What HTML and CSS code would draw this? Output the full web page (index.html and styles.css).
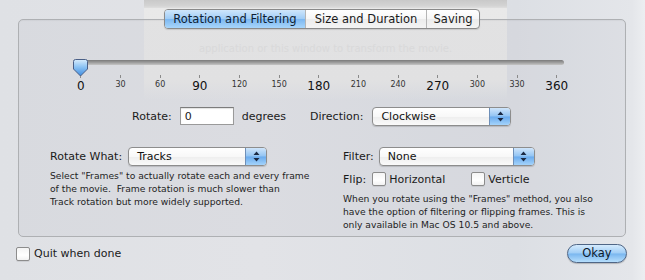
FILE: index.html
```html
<!DOCTYPE html>
<html>
<head>
<meta charset="utf-8">
<link rel="stylesheet" href="styles.css">
</head>
<body>
<div class="desk">
  <div class="behind">
    <div class="behind-bar"></div>
    <div class="behind-text">application or this window to transform the movie.</div>
  </div>
  <div class="sheet">
    <div class="tabs">
      <div class="tab sel">Rotation and Filtering</div>
      <div class="tab mid">Size and Duration</div>
      <div class="tab last">Saving</div>
    </div>
    <div class="box">
      <div class="slider">
        <div class="track"></div>
        <div class="thumb">
          <svg width="15" height="18" viewBox="0 0 15 18">
            <defs>
              <linearGradient id="tg" x1="0" y1="0" x2="0" y2="1">
                <stop offset="0" stop-color="#d8ecfc"/>
                <stop offset="0.45" stop-color="#8cc3f4"/>
                <stop offset="1" stop-color="#3f8ce0"/>
              </linearGradient>
            </defs>
            <path d="M2.5 0.5 H12.5 Q14.5 0.5 14.5 2.5 V10 L7.5 17 L0.5 10 V2.5 Q0.5 0.5 2.5 0.5 Z" fill="url(#tg)" stroke="#4a5f86" stroke-width="1"/>
          </svg>
        </div>
        <div class="ticks">
          <span class="t big"><i></i>0</span>
          <span class="t"><i></i>30</span>
          <span class="t"><i></i>60</span>
          <span class="t big"><i></i>90</span>
          <span class="t"><i></i>120</span>
          <span class="t"><i></i>150</span>
          <span class="t big"><i></i>180</span>
          <span class="t"><i></i>210</span>
          <span class="t"><i></i>240</span>
          <span class="t big"><i></i>270</span>
          <span class="t"><i></i>300</span>
          <span class="t"><i></i>330</span>
          <span class="t big"><i></i>360</span>
        </div>
      </div>

      <div class="rotate-row">
        <span class="lbl">Rotate:</span>
        <div class="field">0</div>
        <span class="lbl deg">degrees</span>
        <span class="lbl dir">Direction:</span>
        <div class="popup w139 pd">
          <span class="val">Clockwise</span>
          <span class="arr"><svg width="7" height="11" viewBox="0 0 7 11"><path d="M3.5 0.5 L6.5 4 H0.5 Z M3.5 10.5 L6.5 7 H0.5 Z" fill="#1b2a44"/></svg></span>
        </div>
      </div>

      <div class="cols">
        <div class="col">
          <div class="line">
            <span class="lbl">Rotate What:</span>
            <div class="popup w139">
              <span class="val">Tracks</span>
              <span class="arr"><svg width="7" height="11" viewBox="0 0 7 11"><path d="M3.5 0.5 L6.5 4 H0.5 Z M3.5 10.5 L6.5 7 H0.5 Z" fill="#1b2a44"/></svg></span>
            </div>
          </div>
          <p class="help">Select "Frames" to actually rotate each and every frame<br>of the movie.&nbsp; Frame rotation is much slower than<br>Track rotation but more widely supported.</p>
        </div>
        <div class="col">
          <div class="line">
            <span class="lbl">Filter:</span>
            <div class="popup w156 pf">
              <span class="val">None</span>
              <span class="arr"><svg width="7" height="11" viewBox="0 0 7 11"><path d="M3.5 0.5 L6.5 4 H0.5 Z M3.5 10.5 L6.5 7 H0.5 Z" fill="#1b2a44"/></svg></span>
            </div>
          </div>
          <div class="flip">
            <span class="lbl">Flip:</span>
            <span class="cb"></span><span class="lbl">Horizontal</span>
            <span class="cb cb2"></span><span class="lbl">Verticle</span>
          </div>
          <p class="help help2">When you rotate using the "Frames" method, you also<br>have the option of filtering or flipping frames. This is<br>only available in Mac OS 10.5 and above.</p>
        </div>
      </div>
    </div>

    <div class="bottom">
      <div class="quit"><span class="cb"></span><span class="lbl">Quit when done</span></div>
      <div class="okay">Okay</div>
    </div>
  </div>
</div>
</body>
</html>
```
FILE: styles.css
```css
html, body {
  margin: 0;
  padding: 0;
}
body {
  width: 645px;
  height: 280px;
  overflow: hidden;
  font-family: "DejaVu Sans", "Liberation Sans", sans-serif;
  color: #1a1a1a;
}
.desk {
  position: relative;
  width: 645px;
  height: 280px;
  background: linear-gradient(90deg, #dfe1e5 0%, #e2e3e7 40%, #dcdfe4 80%, #e4e6ea 98%, #eceef1 100%);
}
.behind {
  position: absolute;
  left: 144px;
  top: 0;
  width: 363px;
  height: 100px;
  background: linear-gradient(#e9e9e9, #e8e8e8 80%, rgba(232,232,232,0));
}
.behind-bar {
  height: 8px;
  background: linear-gradient(#c9c9c9, #d3d3d3 70%, #dedede);
}
.behind-text {
  margin-top: 35px;
  text-align: center;
  font-size: 10px;
  color: #e0e0e0;
}
.sheet {
  position: relative;
  padding: 9px 0 0 18px;
}
.tabs {
  position: relative;
  z-index: 1;
  display: flex;
  margin-left: 146px;
  width: max-content;
  height: 18px;
  border: 1px solid #8a8a8a;
  border-radius: 4px;
  overflow: hidden;
  background: linear-gradient(#ffffff, #f6f6f6 50%, #ececec 51%, #f4f4f4);
  box-shadow: 0 1px 1px rgba(0,0,0,0.12);
}
.tab {
  box-sizing: border-box;
  font-size: 11.5px;
  line-height: 18px;
  text-align: center;
  white-space: nowrap;
  border-left: 1px solid #b5b5b5;
  color: #1a1a1a;
}
.tab.sel {
  width: 140px;
  border-left: 0;
  background: linear-gradient(#cfe6fb, #a1cdf6 48%, #7db8f1 52%, #a8d6fb);
  color: #0e1e33;
}
.tab.mid {
  width: 121px;
}
.tab.last {
  width: 53px;
}
.box {
  margin-top: -10px;
  width: 606px;
  height: 216px;
  border: 1px solid #aeb0b3;
  border-radius: 5px;
  background: rgba(120,125,135,0.06);
  box-shadow: inset 0 1px 1px rgba(0,0,0,0.04);
}
.slider {
  position: relative;
  margin: 40px 0 0 42px;
  width: 516px;
}
.track {
  margin-left: 15px;
  width: 488px;
  height: 5px;
  margin-top: 6px;
  border-radius: 3px;
  background: linear-gradient(#7a7a7a, #9d9d9d 50%, #c5c5c5);
}
.thumb {
  position: absolute;
  left: 12px;
  top: -1px;
  line-height: 0;
}
.ticks {
  display: grid;
  grid-template-columns: repeat(13, 39.67px);
  margin-top: 10px;
}
.t {
  display: flex;
  flex-direction: column;
  align-items: center;
  font-size: 8px;
  color: #333;
  line-height: 10px;
}
.t i {
  display: block;
  width: 1px;
  height: 3px;
  background: #8a8a8a;
  margin-bottom: 2px;
}
.t.big {
  font-size: 12px;
  line-height: 14px;
  color: #111;
}
.t.big i {
  margin-bottom: 1px;
}
.rotate-row {
  display: flex;
  align-items: center;
  margin: 13px 0 0 113px;
  height: 20px;
}
.lbl {
  font-size: 11px;
  color: #1a1a1a;
  white-space: nowrap;
}
.field {
  margin-left: 8px;
  width: 48px;
  height: 16px;
  padding-left: 4px;
  border: 1px solid #9a9a9a;
  border-top-color: #7c7c7c;
  background: #fff;
  box-shadow: inset 0 1px 1px rgba(0,0,0,0.12);
  font-size: 11px;
  line-height: 17px;
}
.deg {
  margin-left: 8px;
}
.dir {
  margin-left: 24px;
}
.popup {
  display: flex;
  align-items: stretch;
  margin-left: 6px;
  height: 17px;
  border: 1px solid #8d8d8d;
  border-radius: 4px;
  overflow: hidden;
  background: linear-gradient(#ffffff, #f8f8f8 50%, #eeeeee 52%, #fafafa);
  box-shadow: 0 1px 1px rgba(0,0,0,0.15);
}
.pd {
  margin-left: 9px;
}
.pf {
  margin-left: 5px;
}
.w139 { width: 137px; }
.w156 { width: 154px; }
.val {
  flex: 1;
  padding-left: 8px;
  font-size: 11px;
  line-height: 17px;
  color: #111;
}
.arr {
  width: 20px;
  display: flex;
  align-items: center;
  justify-content: center;
  border-left: 1px solid #6e8fb8;
  background: linear-gradient(#cfe5fb, #92c4f3 48%, #6aabee 52%, #a4d3fb);
}
.cols {
  display: grid;
  grid-template-columns: 293px 1fr;
  margin: 21px 0 0 31px;
}
.line {
  display: flex;
  align-items: center;
  height: 19px;
}
.help {
  margin: 3px 0 0 0;
  font-size: 9.2px;
  line-height: 13px;
  color: #1e1e1e;
}
.help2 {
  margin-top: 6px;
}
.flip {
  display: flex;
  align-items: center;
  margin-top: 6px;
  height: 14px;
}
.cb {
  display: inline-block;
  width: 12px;
  height: 12px;
  border: 1px solid #8c8c8c;
  border-radius: 2px;
  background: linear-gradient(#f4f4f4, #ffffff 60%, #f2f2f2);
  box-shadow: 0 1px 0 rgba(0,0,0,0.08);
  margin: 0 3px 0 6px;
}
.cb2 {
  margin-left: 26px;
}
.bottom {
  display: flex;
  align-items: center;
  justify-content: space-between;
  width: 611px;
  margin: 7px 0 0 -2px;
  height: 19px;
}
.quit {
  display: flex;
  align-items: center;
}
.quit .cb {
  margin: 0 4px 0 0;
}
.okay {
  width: 58px;
  height: 17px;
  border: 1px solid #4f6686;
  border-radius: 10px;
  text-align: center;
  font-size: 11.5px;
  line-height: 17px;
  color: #0d1a2c;
  background: linear-gradient(#d5ebfd, #9fcdf6 48%, #79b6ef 52%, #b6defc);
  box-shadow: 0 1px 1px rgba(0,0,0,0.2);
}
```
